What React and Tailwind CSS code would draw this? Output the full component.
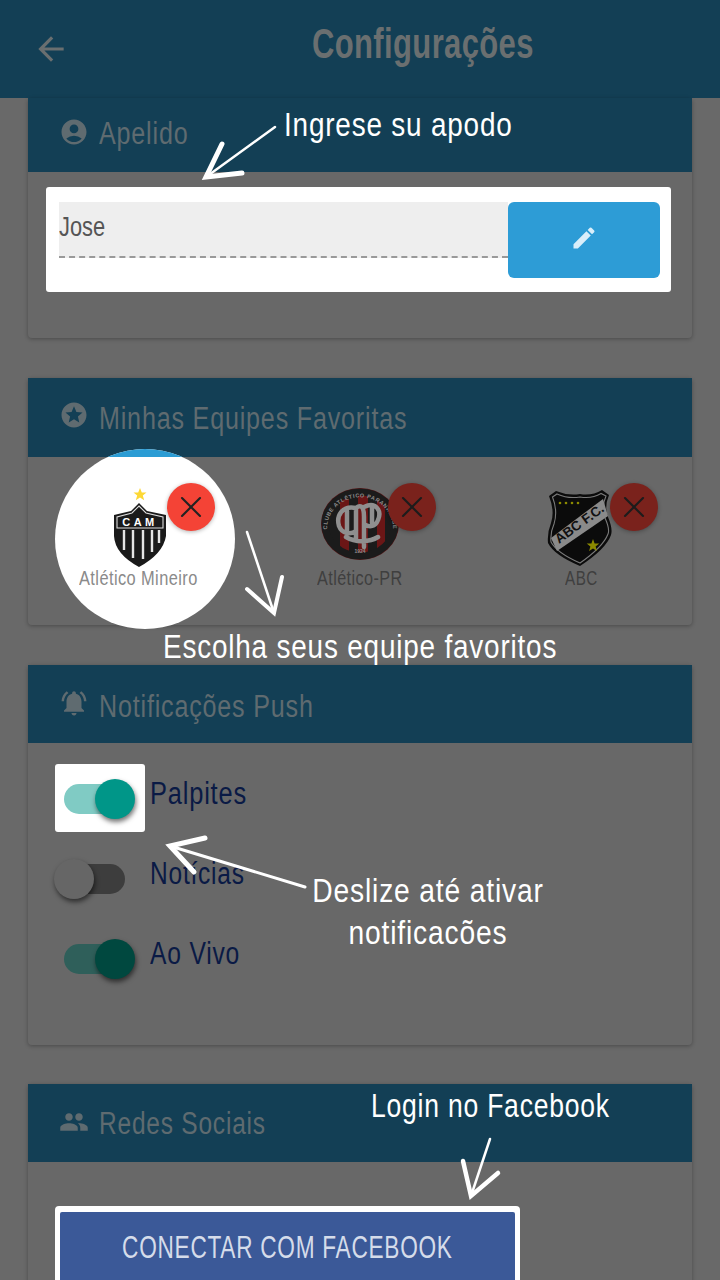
import { MdAccountCircle, MdStars, MdNotificationsActive, MdPeople, MdEdit, MdArrowBack } from 'react-icons/md';
import { X } from 'lucide-react';

const font = { fontFamily: '"Liberation Sans", sans-serif' };

function CamCrest() {
    return (
        <svg width="56" height="84" viewBox="0 0 56 84">
            <polygon points="29,2 30.8,6.4 35.5,6.6 31.8,9.6 33.2,14.2 29,11.6 24.8,14.2 26.2,9.6 22.5,6.6 27.2,6.4" fill="#fdd835" />
            <path d="M28 17 L36 25 L55 29 L55 50 Q52 68 28 81 Q4 68 3 50 L3 29 L20 25 Z" fill="#1a1a1a" />
            <path d="M28 20 L35 27 L52 31 L52 42 H6 V31 L21 27 Z" fill="none" stroke="#ddd" strokeWidth="1.1" />
            <text x="29" y="39.5" textAnchor="middle" fill="#fff" fontSize="11" fontWeight="700" letterSpacing="3.5">CAM</text>
            <path d="M13 44 V64 M22 44 V72 M32 44 V73 M41 44 V66 M48 44 V57" stroke="#e5e5e5" strokeWidth="2.4" />
        </svg>
    );
}

function CapCrest() {
    return (
        <svg width="80" height="74" viewBox="0 0 80 74" className="-mt-[9px]">
            <defs>
                <path id="capRing" d="M9 52 A33 31 0 1 1 71 52" />
            </defs>
            <ellipse cx="40" cy="37" rx="39" ry="36" fill="#5c1717" />
            <ellipse cx="40" cy="37" rx="37.5" ry="34.5" fill="#1b1b1b" />
            <path d="M20 12 H29 V66 H20 Z M38 7 H48 V68 H38 Z M57 10 H65 V62 H57 Z" fill="#6b1616" />
            <ellipse cx="40" cy="37" rx="35" ry="32" fill="none" stroke="#1b1b1b" strokeWidth="7" />
            <text fontSize="5.5" fontWeight="700" fill="#8d8d8d" letterSpacing="0.6" textAnchor="middle">
                <textPath href="#capRing" startOffset="50%">CLUBE ATLÉTICO PARANAENSE</textPath>
            </text>
            <text x="40" y="66" textAnchor="middle" fontSize="5" fontWeight="700" fill="#8d8d8d">1924</text>
            <path d="M36 21 C22 18 16 29 19 39 C22 47 31 48 36 44 M36 21 V53 M27 24 V44 M36 21 C42 16 44 22 44 30 V60 M44 20 C56 14 62 24 58 33 C55 41 48 40 44 37 M52 20 V36 M26 50 C36 56 50 55 58 50" fill="none" stroke="#8f8f8f" strokeWidth="4.5" strokeLinecap="round" />
        </svg>
    );
}

function AbcCrest() {
    return (
        <svg width="68" height="78" viewBox="0 0 68 78" className="-ml-[2px]">
            <path d="M3 7 L10 2 Q22 7 34 5 Q46 7 56 1 L63 6 Q58 18 62 28 Q67 40 65 46 Q60 60 34 77 Q8 66 2 54 Q1 44 5 34 Q9 22 3 7 Z" fill="#0b0b0b" />
            <path d="M6.5 8 L11 5 Q22 10 34 8 Q46 10 55 4.5 L60 7 Q55 18 59 29 Q64 40 62 45 Q57 58 34 74 Q11 64 5 53 Q4 44 8 35 Q12 22 6.5 8 Z" fill="none" stroke="#7b7b7b" strokeWidth="1.1" />
            <path d="M5 49 L57 10 L62 27 L11 62 Z" fill="#8a8a8a" />
            <text x="0" y="0" transform="translate(13 55) rotate(-36)" fontSize="13.5" fontWeight="700" fill="#111" letterSpacing="0">ABC F.C.</text>
            <polygon points="47,50 48.6,54.4 53.3,54.6 49.6,57.5 50.9,62 47,59.4 43.1,62 44.4,57.5 40.7,54.6 45.4,54.4" fill="#8c8a00" />
            <circle cx="14" cy="14" r="1.3" fill="#8c8a00" />
            <circle cx="20" cy="14" r="1.3" fill="#8c8a00" />
            <circle cx="26" cy="14" r="1.3" fill="#8c8a00" />
            <circle cx="32" cy="14" r="1.3" fill="#8c8a00" />
        </svg>
    );
}

function CardHeader({ icon, title, height, titleClass, textClass }) {
    return (
        <div className={`flex items-center gap-[10px] bg-[#133f55] pl-[31px] text-[#5f6b70] ${height}`}>
            <span className={textClass}>{icon}</span>
            <span className={`origin-left whitespace-nowrap text-[31px] tracking-[1px] ${titleClass}`}>{title}</span>
        </div>
    );
}

function Card({ children, className = '' }) {
    return <section className={`rounded-[4px] bg-[#686868] shadow-[0_1px_4px_rgba(0,0,0,0.3)] ${className}`}>{children}</section>;
}

function Team({ name, crest, highlight, nameClass }) {
    return (
        <div className="relative flex h-[168px] flex-col items-center pt-[29px]">
            {highlight && (
                <div className="absolute left-[27px] top-[-8px] h-[180px] w-[180px] overflow-hidden rounded-full bg-white">
                    <div className="h-[8px] bg-[#2b9cd4]" />
                </div>
            )}
            <div className="relative flex h-[84px] items-center justify-center">{crest}</div>
            <span className={`relative -mt-[4px] whitespace-nowrap text-[20px] leading-[24px] tracking-[0.5px] ${nameClass} ${highlight ? 'text-[#8a8a8a]' : 'text-[#3f3f3f]'}`}>{name}</span>
            <button className={`absolute left-[139px] top-[26px] flex h-[48px] w-[48px] items-center justify-center rounded-full shadow-[0_1px_4px_rgba(0,0,0,0.3)] ${highlight ? 'bg-[#f44336] text-[#222]' : 'bg-[#7a221c] text-[#1c1c1c]'}`}>
                <X size={36} strokeWidth={1.4} />
            </button>
        </div>
    );
}

function Toggle({ on, track, knob, highlight, label, labelClass }) {
    return (
        <div className="flex h-[80px] items-start">
            <div className={`mt-[6px] flex h-[68px] w-[90px] items-center rounded-[3px] pl-[9px] ${highlight ? 'bg-white' : ''}`}>
                <div className={`relative mt-[2px] h-[30px] w-[61px] rounded-full ${track}`}>
                    <div className={`absolute top-[-5px] h-[40px] w-[40px] rounded-full shadow-[1px_3px_5px_rgba(0,0,0,0.55)] ${on ? 'left-[31px]' : 'left-[-10px]'} ${knob}`} />
                </div>
            </div>
            <span className={`ml-[5px] mt-[16px] origin-left whitespace-nowrap text-[31px] leading-[40px] tracking-[1px] text-[#0a1a45] ${labelClass}`}>{label}</span>
        </div>
    );
}

export default function App() {
    return (
        <div className="relative h-[1280px] w-[720px] overflow-hidden bg-[#696969]" style={font}>
            <header className="flex h-[98px] items-center bg-[#133f55] pl-[32px] text-[#6a6f70]">
                <MdArrowBack size={38} />
                <h1 className="ml-[242px] -mt-[12px] origin-left scale-x-[0.738] whitespace-nowrap text-[42px] font-bold tracking-[0.5px]">Configurações</h1>
            </header>

            <main className="flex flex-col px-[28px]">
                <Card>
                    <CardHeader height="h-[74px]" title="Apelido" titleClass="scale-x-[0.81] -mt-[2px]" icon={<MdAccountCircle size={30} />} textClass="-mt-[6px]" />
                    <div className="px-[18px] pb-[46px] pt-[15px]">
                        <div className="flex h-[105px] w-[625px] items-start rounded-[3px] bg-white pl-[13px] pt-[15px]">
                            <div className="flex h-[56px] w-[449px] items-start border-b-2 border-dashed border-[#999] bg-[#eee] pt-[4px] text-[#555]">
                                <span className="origin-left scale-x-[0.78] text-[28px]">Jose</span>
                            </div>
                            <button className="flex h-[76px] w-[152px] items-center justify-center rounded-[6px] bg-[#2d9cd6] text-[#d9eefa]">
                                <MdEdit size={28} className="-mt-[4px]" />
                            </button>
                        </div>
                    </div>
                </Card>

                <Card className="mt-[40px]">
                    <CardHeader height="h-[79px]" title="Minhas Equipes Favoritas" titleClass="scale-x-[0.81] mt-[4px]" icon={<MdStars size={30} />} textClass="-mt-[6px]" />
                    <div className="grid grid-cols-3">
                        <Team name="Atlético Mineiro" nameClass="scale-x-[0.82]" crest={<CamCrest />} highlight />
                        <Team name="Atlético-PR" nameClass="scale-x-[0.81]" crest={<CapCrest />} />
                        <Team name="ABC" nameClass="scale-x-[0.76]" crest={<AbcCrest />} />
                    </div>
                </Card>

                <Card className="mt-[40px]">
                    <CardHeader height="h-[78px]" title="Notificações Push" titleClass="scale-x-[0.81] mt-[6px]" icon={<MdNotificationsActive size={30} />} textClass="-mt-[2px]" />
                    <div className="pb-[47px] pl-[27px] pt-[15px]">
                        <Toggle on highlight track="bg-[#80cbc4]" knob="bg-[#009688]" label="Palpites" labelClass="scale-x-[0.82]" />
                        <Toggle track="bg-[#3d3d3d]" knob="bg-[#666]" label="Notícias" labelClass="scale-x-[0.79]" />
                        <Toggle on track="bg-[#2f5f5a]" knob="bg-[#00483f]" label="Ao Vivo" labelClass="scale-x-[0.795]" />
                    </div>
                </Card>

                <Card className="mt-[39px]">
                    <CardHeader height="h-[78px]" title="Redes Sociais" titleClass="scale-x-[0.79] mt-[3px]" icon={<MdPeople size={30} />} textClass="-mt-[2px]" />
                    <div className="pl-[27px] pt-[44px]">
                        <div className="h-[90px] w-[465px] rounded-[4px] bg-white px-[5px] pt-[6px]">
                            <button className="flex h-[80px] w-full items-start justify-center overflow-visible rounded-[2px] bg-[#3b5998] pt-[13px] text-[#d5dcea]">
                                <span className="scale-x-[0.73] whitespace-nowrap text-[31px] tracking-[1px]">CONECTAR COM FACEBOOK</span>
                            </button>
                        </div>
                    </div>
                </Card>
            </main>

            {/* annotation layer */}
            <span className="absolute left-[284px] top-[103px] origin-left scale-x-[0.82] whitespace-nowrap text-[34px] leading-[42px] tracking-[1px] text-white">Ingrese su apodo</span>
            <span className="absolute left-[163px] top-[625px] origin-left scale-x-[0.82] whitespace-nowrap text-[34px] leading-[42px] tracking-[1px] text-white">Escolha seus equipe favoritos</span>
            <div className="absolute left-[268px] top-[869px] w-[320px] scale-x-[0.83] text-center text-[34px] leading-[42px] tracking-[1px] text-white">
                <span className="block whitespace-nowrap">Deslize até ativar</span>
                <span className="block whitespace-nowrap">notificacões</span>
            </div>
            <span className="absolute left-[371px] top-[1084px] origin-left scale-x-[0.78] whitespace-nowrap text-[34px] leading-[42px] tracking-[1px] text-white">Login no Facebook</span>

            <svg className="pointer-events-none absolute left-0 top-0" width="720" height="1280" viewBox="0 0 720 1280" fill="none" stroke="#fff" strokeLinecap="round">
                <path d="M275 127 L206 177" strokeWidth="2.5" />
                <path d="M222 144 L206 177 L242 173" strokeWidth="5" />
                <path d="M247 532 L274 613" strokeWidth="2.5" />
                <path d="M247 589 L274 613 L282 577" strokeWidth="4" />
                <path d="M305 887 L170 846" strokeWidth="3" />
                <path d="M205 838 L170 846 L194 872" strokeWidth="5" />
                <path d="M490 1139 L471 1196" strokeWidth="2.5" />
                <path d="M463 1161 L471 1196 L498 1173" strokeWidth="4.5" />
            </svg>
        </div>
    );
}
